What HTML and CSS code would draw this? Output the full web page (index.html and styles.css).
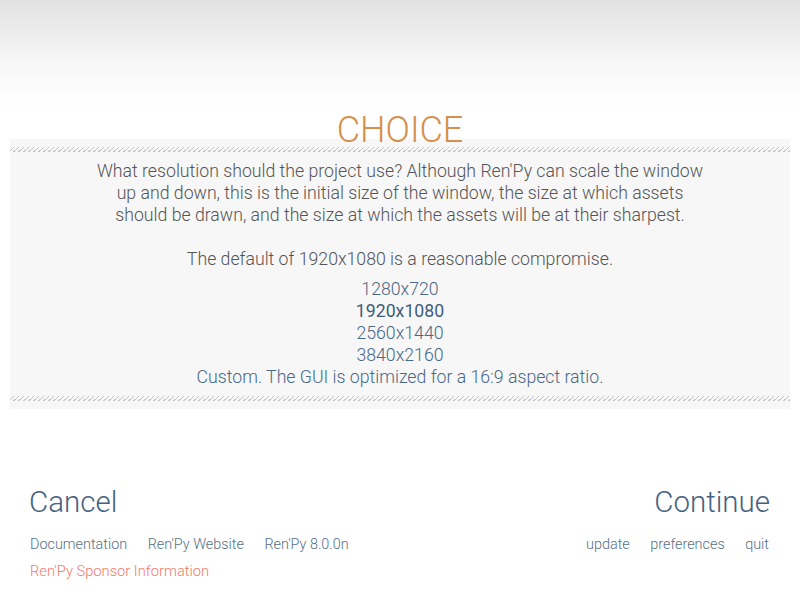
FILE: index.html
```html
<!DOCTYPE html>
<html>
<head>
<meta charset="utf-8">
<link rel="stylesheet" href="styles.css">
</head>
<body>
<div class="screen">
  <header class="top">
    <h1 class="title">CHOICE</h1>
  </header>
  <section class="panel">
    <div class="hatch"></div>
    <p class="prompt">What resolution should the project use? Although Ren'Py can scale the window<br>up and down, this is the initial size of the window, the size at which assets<br>should be drawn, and the size at which the assets will be at their sharpest.<br><br>The default of 1920x1080 is a reasonable compromise.</p>
    <ul class="choices">
      <li>1280x720</li>
      <li class="selected">1920x1080</li>
      <li>2560x1440</li>
      <li>3840x2160</li>
      <li>Custom. The GUI is optimized for a 16:9 aspect ratio.</li>
    </ul>
    <div class="hatch"></div>
  </section>
  <footer class="bottom">
    <div class="side">
      <div class="big">Cancel</div>
      <nav class="links">
        <span>Documentation</span>
        <span>Ren'Py Website</span>
        <span>Ren'Py 8.0.0n</span>
      </nav>
      <div class="links"><span class="sponsor">Ren'Py Sponsor Information</span></div>
    </div>
    <div class="side right">
      <div class="big">Continue</div>
      <nav class="links">
        <span>update</span>
        <span>preferences</span>
        <span>quit</span>
      </nav>
    </div>
  </footer>
</div>
</body>
</html>
```

FILE: styles.css
```css
html, body {
  margin: 0;
  padding: 0;
  background: #ffffff;
}
body {
  font-family: Roboto, "Open Sans", sans-serif;
  font-weight: 300;
}
.screen {
  width: 800px;
  height: 600px;
  overflow: hidden;
  background: linear-gradient(to bottom, #e2e2e2 0px, #f6f6f6 60px, #ffffff 108px, #ffffff 600px);
}
.top {
  height: 139px;
  position: relative;
  z-index: 1;
}
.title {
  margin: 0;
  padding-top: 112px;
  font-weight: 300;
  font-size: 36px;
  line-height: 36px;
  color: #d4904d;
  text-align: center;
}
.panel {
  margin: 0 10px;
  background: #f7f7f7;
  padding: 8px 0;
}
.hatch {
  height: 5px;
  background-image: repeating-linear-gradient(135deg, transparent 0px, transparent 2.2px, #c4c4c4 2.2px, #c4c4c4 3.3px);
  background-size: 5px 5px;
}
.prompt {
  margin: 8px 0 0;
  font-size: 17.7px;
  line-height: 22px;
  color: #555555;
  text-align: center;
}
.choices {
  list-style: none;
  margin: 8px 0 8px;
  padding: 0;
  font-size: 17.7px;
  line-height: 22px;
  color: #4a6886;
  text-align: center;
}
.choices .selected {
  font-weight: 400;
  color: #3f5d7b;
}
.bottom {
  display: flex;
  justify-content: space-between;
  padding: 75px 30px 0 29px;
}
.side {
  display: flex;
  flex-direction: column;
}
.side.right {
  align-items: flex-end;
}
.big {
  font-size: 29.5px;
  line-height: 36px;
  color: #45627f;
}
.links {
  display: flex;
  gap: 20.5px;
  font-size: 14.4px;
  line-height: 27px;
  color: #566f87;
  margin-top: 11px;
  padding-left: 1px;
}
.right .links {
  padding-left: 0;
  padding-right: 1px;
}
.links + .links {
  margin-top: 0;
}
.sponsor {
  font-size: 14.7px;
  color: #f37b6a;
}
```
